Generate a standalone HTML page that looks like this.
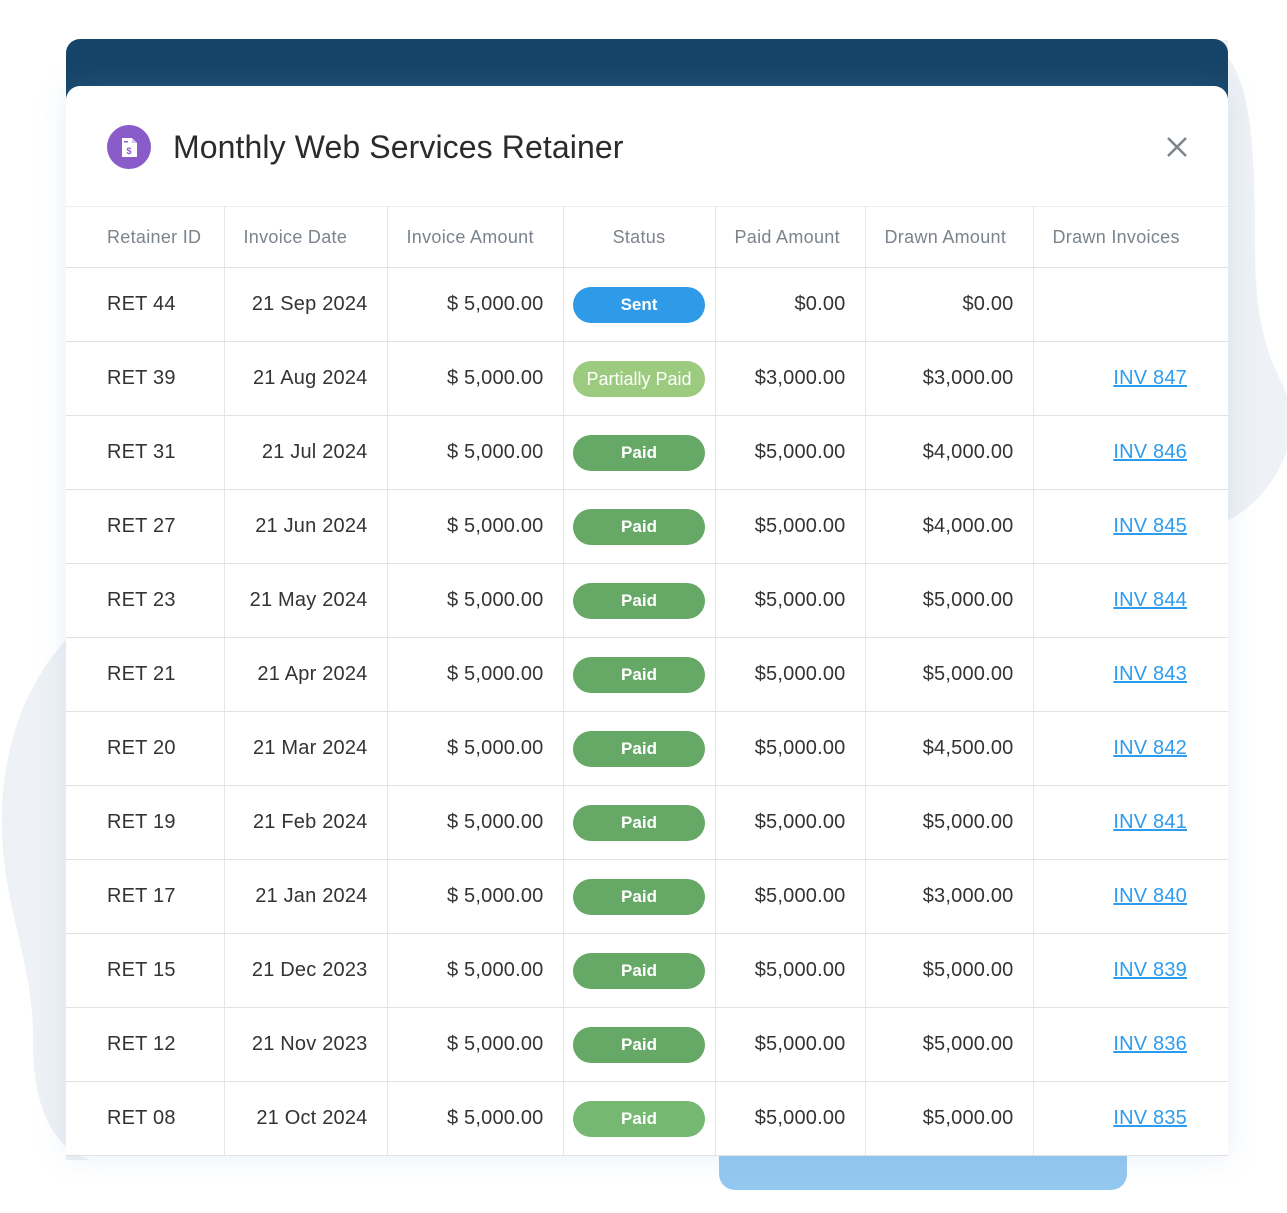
<!DOCTYPE html>
<html><head><meta charset="utf-8"><style>
*{margin:0;padding:0;box-sizing:border-box}
body{width:1287px;height:1213px;background:#fff;position:relative;overflow:hidden;font-family:"Liberation Sans",Arial,sans-serif}
.dark{position:absolute;left:66px;top:39px;width:1162px;height:120px;background:#164468;border-radius:14px 14px 0 0}
.card{position:absolute;left:66px;top:86px;width:1162px;height:1070px;background:#fff;border-radius:14px 14px 0 0;overflow:hidden;box-shadow:0 0 30px rgba(120,160,210,.18)}
.icon{position:absolute;left:41px;top:39px;width:44px;height:44px;border-radius:50%;background:#8a5cc9}
.title{position:absolute;left:107px;top:43px;font-size:32px;color:#2b2b2b;letter-spacing:0.1px}
.close{position:absolute;left:1100px;top:50px}
table{position:absolute;left:0;top:120px;width:1162px;border-collapse:collapse;table-layout:fixed}
td,th{border-right:1px solid #e6e6e6;border-bottom:1px solid #e2e2e2;font-size:20px;color:#333;white-space:nowrap}
td:last-child,th:last-child{border-right:none}
th{height:61px;font-weight:normal;font-size:18px;color:#7b838c;text-align:left;padding-left:19px;border-top:1px solid #eee;letter-spacing:0.3px}
td{height:74px;text-align:right;padding-right:19px;letter-spacing:0.2px}
td.id{text-align:left;padding-left:41px}
th.id{padding-left:41px}
th.st{text-align:center;padding-left:0}
td.st{text-align:center;padding:0}
.b{display:inline-block;width:132px;height:36px;line-height:36px;border-radius:18px;color:#fff;font-size:17px;font-weight:bold;margin-left:0;letter-spacing:0}
a{color:#2d9bee;text-decoration:underline}
td.l{padding-right:41px}
</style></head><body>
<svg width="1287" height="1213" style="position:absolute;left:0;top:0">
<path d="M1180 40 C1250 30 1255 120 1255 250 C1255 360 1287 380 1287 400 L1287 450 C1270 500 1230 520 1228 520 L1228 40 Z" fill="#eef1f5"/>
<path d="M66 640 C20 690 0 760 2 830 C5 920 35 960 33 1050 C35 1120 60 1150 90 1160 L66 1160 Z" fill="#eef1f5"/>
<rect x="719" y="1140" width="408" height="50" rx="16" fill="#93c8f1"/>
</svg>
<div class="dark"></div>
<div class="card">
<div class="icon"><svg width="44" height="44" viewBox="0 0 44 44"><path d="M15 13h10l5 5v14h-15z" fill="#fff"/><path d="M25 13v5h5" fill="#d8c8ef"/><text x="22" y="29" font-size="9" fill="#8a5cc9" text-anchor="middle" font-family="Liberation Sans" font-weight="bold">$</text><rect x="17" y="16" width="4" height="1.5" fill="#8a5cc9"/></svg></div>
<div class="title">Monthly Web Services Retainer</div>
<svg class="close" width="22" height="22" viewBox="0 0 22 22"><path d="M2 2L20 20M20 2L2 20" stroke="#7d858d" stroke-width="2.6"/></svg>
<table>
<colgroup><col style="width:158px"><col style="width:163px"><col style="width:176px"><col style="width:152px"><col style="width:150px"><col style="width:168px"><col style="width:195px"></colgroup>
<tr><th class="id">Retainer ID</th><th>Invoice Date</th><th>Invoice Amount</th><th class="st">Status</th><th>Paid Amount</th><th>Drawn Amount</th><th>Drawn Invoices</th></tr>
<tr><td class="id">RET 44</td><td>21 Sep 2024</td><td>$ 5,000.00</td><td class="st"><span class="b" style="background:#2f9ae8">Sent</span></td><td>$0.00</td><td>$0.00</td><td class="l"></td></tr>
<tr><td class="id">RET 39</td><td>21 Aug 2024</td><td>$ 5,000.00</td><td class="st"><span class="b" style="background:#9ccb7f;font-weight:normal;font-size:18px">Partially Paid</span></td><td>$3,000.00</td><td>$3,000.00</td><td class="l"><a>INV 847</a></td></tr>
<tr><td class="id">RET 31</td><td>21 Jul 2024</td><td>$ 5,000.00</td><td class="st"><span class="b" style="background:#66a865">Paid</span></td><td>$5,000.00</td><td>$4,000.00</td><td class="l"><a>INV 846</a></td></tr>
<tr><td class="id">RET 27</td><td>21 Jun 2024</td><td>$ 5,000.00</td><td class="st"><span class="b" style="background:#66a865">Paid</span></td><td>$5,000.00</td><td>$4,000.00</td><td class="l"><a>INV 845</a></td></tr>
<tr><td class="id">RET 23</td><td>21 May 2024</td><td>$ 5,000.00</td><td class="st"><span class="b" style="background:#66a865">Paid</span></td><td>$5,000.00</td><td>$5,000.00</td><td class="l"><a>INV 844</a></td></tr>
<tr><td class="id">RET 21</td><td>21 Apr 2024</td><td>$ 5,000.00</td><td class="st"><span class="b" style="background:#66a865">Paid</span></td><td>$5,000.00</td><td>$5,000.00</td><td class="l"><a>INV 843</a></td></tr>
<tr><td class="id">RET 20</td><td>21 Mar 2024</td><td>$ 5,000.00</td><td class="st"><span class="b" style="background:#66a865">Paid</span></td><td>$5,000.00</td><td>$4,500.00</td><td class="l"><a>INV 842</a></td></tr>
<tr><td class="id">RET 19</td><td>21 Feb 2024</td><td>$ 5,000.00</td><td class="st"><span class="b" style="background:#66a865">Paid</span></td><td>$5,000.00</td><td>$5,000.00</td><td class="l"><a>INV 841</a></td></tr>
<tr><td class="id">RET 17</td><td>21 Jan 2024</td><td>$ 5,000.00</td><td class="st"><span class="b" style="background:#66a865">Paid</span></td><td>$5,000.00</td><td>$3,000.00</td><td class="l"><a>INV 840</a></td></tr>
<tr><td class="id">RET 15</td><td>21 Dec 2023</td><td>$ 5,000.00</td><td class="st"><span class="b" style="background:#66a865">Paid</span></td><td>$5,000.00</td><td>$5,000.00</td><td class="l"><a>INV 839</a></td></tr>
<tr><td class="id">RET 12</td><td>21 Nov 2023</td><td>$ 5,000.00</td><td class="st"><span class="b" style="background:#66a865">Paid</span></td><td>$5,000.00</td><td>$5,000.00</td><td class="l"><a>INV 836</a></td></tr>
<tr><td class="id">RET 08</td><td>21 Oct 2024</td><td>$ 5,000.00</td><td class="st"><span class="b" style="background:#74b872">Paid</span></td><td>$5,000.00</td><td>$5,000.00</td><td class="l"><a>INV 835</a></td></tr>
<tr><td class="id"></td><td></td><td></td><td></td><td></td><td></td><td></td></tr>
</table>
</div>
</body></html>
